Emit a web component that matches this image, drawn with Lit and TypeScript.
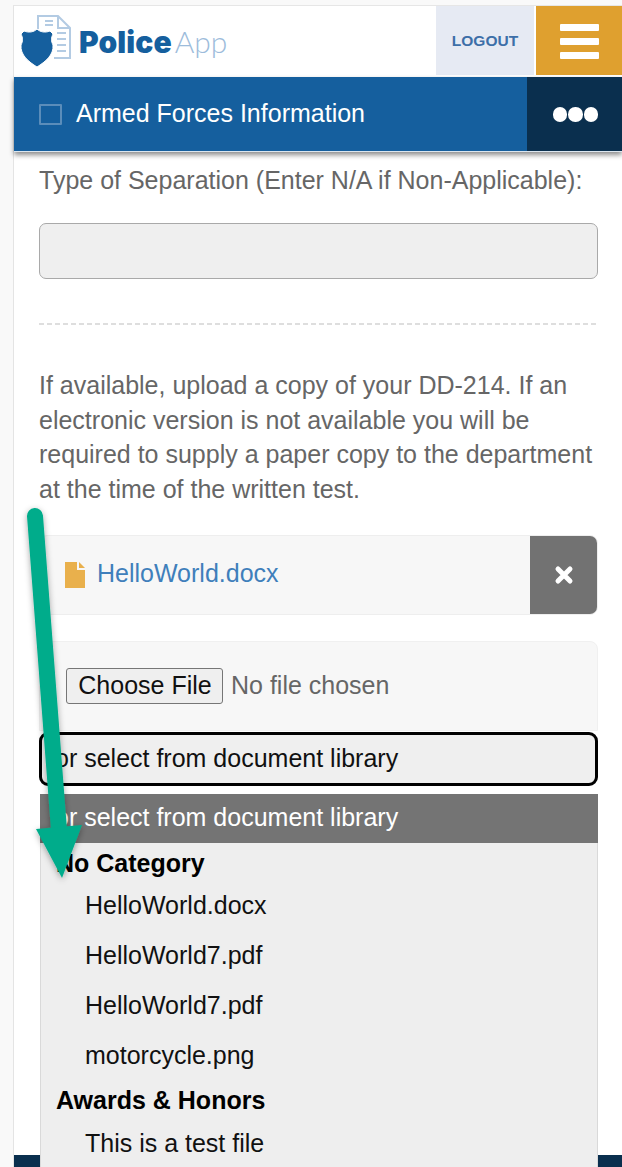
import { LitElement, html, css } from "lit";
import { customElement } from "lit/decorators.js";

@customElement("app-root")
export class AppRoot extends LitElement {
  static styles = css`
    :host { display: block; position: relative; height: 1167px; overflow: hidden; background: #f9f9f9; font-family: "Liberation Sans", Arial, sans-serif; color: #666; }
    * { box-sizing: border-box; }
    .frame { margin-left: 13px; padding-top: 5px; height: 1167px; display: flex; flex-direction: column; }
    .page { background: #fff; border-top: 1px solid #e6e6e6; border-left: 1px solid #e4e4e4; flex: 1; display: flex; flex-direction: column; min-height: 0; }
    .top { height: 69px; display: flex; background: #fff; }
    .logo { flex: 1; display: flex; align-items: center; padding-left: 6px; }
    .logo svg { width: 52px; height: 54px; margin-top: 3px; }
    .brand { margin-left: 7px; font-size: 30px; line-height: 34px; color: #155f9e; font-family: Inter, sans-serif; font-weight: 900; letter-spacing: 0.1px; margin-top: 1px; }
    .brand span { font-family: Lato, sans-serif; font-weight: 300; color: #9dbcdb; letter-spacing: 0; margin-left: 3px; }
    .logout { width: 98px; background: #e6eaf3; display: flex; align-items: center; justify-content: center; font-size: 15.5px; font-weight: bold; color: #3d6fa8; }
    .burger { width: 86px; margin-left: 2px; background: #dfa02f; display: flex; flex-direction: column; align-items: center; justify-content: center; gap: 7px; padding-top: 1px; }
    .burger i { display: block; width: 39px; height: 7px; background: #fff; border-radius: 1px; }
    .bar { margin-top: 2px; height: 75px; background: #155f9e; display: flex; align-items: center; box-shadow: 0 3px 5px rgba(0,0,0,.45); border-bottom: 1px solid #dce6ef; position: relative; }
    .check { width: 23px; height: 21px; margin-left: 25px; border: 2px solid #5b8dba; border-radius: 1px; }
    .bar .title { flex: 1; margin-left: 14px; padding-bottom: 2px; color: #fff; font-size: 25px; }
    .dots { width: 95px; align-self: stretch; background: #0a2f4e; display: flex; align-items: center; justify-content: center; gap: 1px; padding: 1px 0 0 2px; }
    .dots i { width: 14.5px; height: 14.5px; border-radius: 50%; background: #fff; }
    .body { flex: 1; padding: 0 24px 0 25px; min-height: 0; }
    .label { margin-top: 11px; font-size: 25px; line-height: 34px; }
    .input { margin-top: 26px; height: 56px; background: #efefef; border: 1px solid #a9a9a9; border-radius: 7px; }
    .rule { margin-top: 44px; height: 2px; background: repeating-linear-gradient(90deg, #dedede 0 5px, transparent 5px 8px); }
    .para { margin: 43px 0 0; font-size: 25px; line-height: 34.5px; }
    .file { margin-top: 29px; height: 80px; background: #f7f7f7; border: 1px solid #eee; border-radius: 8px; display: flex; align-items: center; padding-left: 25px; overflow: hidden; }
    .file svg { width: 20px; height: 26px; }
    .file a { margin-left: 12px; padding-bottom: 3px; color: #3f7fbb; font-size: 25px; flex: 1; }
    .del { align-self: stretch; width: 67px; background: #727272; display: flex; align-items: center; justify-content: center; margin: -1px 0; }
    .del svg { width: 20px; height: 20px; }
    .chooser { margin-top: 26px; height: 90px; background: #f7f7f7; border: 1px solid #f0f0f0; border-radius: 8px 8px 0 0; padding: 26px 0 0 26px; display: flex; align-items: flex-start; gap: 8px; font-size: 25px; }
    .btn { height: 36px; width: 157px; background: #efefef; border: 1px solid #767676; border-radius: 3px; font: inherit; color: #111; padding: 0 0 2px 1px; }
    .nofile { line-height: 34px; }
    .select { height: 54px; margin-top: 1px; background: #efefef; border: 3px solid #000; border-radius: 9px; font-size: 25px; line-height: 46px; color: #111; padding-left: 13px; }
    .foot { height: 12px; background: #0a2f4e; margin-top: auto; flex: none; }
    .drop { position: absolute; left: 40px; top: 794px; width: 558px; height: 373px; background: #eee; border: 1px solid #d9d9d9; border-bottom: 0; font-size: 25px; color: #111; }
    .drop .head { height: 49px; line-height: 47px; margin: -1px -1px 0; background: #747474; color: #fff; padding-left: 15px; }
    .drop .cat { font-weight: bold; color: #000; padding: 2px 0 0 15px; line-height: 36px; height: 38px; }
    .drop .opt { padding-left: 44px; height: 50px; line-height: 48px; }
    .drop .cat.second { height: 40px; line-height: 38px; padding-top: 0; }
    .drop .opt.last { height: 46px; line-height: 44px; }
    .arrow { position: absolute; left: 0; top: 0; width: 622px; height: 1167px; pointer-events: none; }
  `;

  render() {
    return html`
      <div class="frame">
        <div class="page">
          <div class="top">
            <div class="logo">
              <svg viewBox="0 0 52 54">
                <path d="M18 14V1H38L50 13V43H34" fill="none" stroke="#b3cbe3" stroke-width="2"/>
                <path d="M38 1V13H50" fill="none" stroke="#b3cbe3" stroke-width="2"/>
                <path d="M25 6h8M25 10h8M37 18h9M37 24h9M37 30h9M37 36h9" stroke="#b3cbe3" stroke-width="2"/>
                <path d="M17 14C20 17 25 18 30 16L33 19C31 23 31 26 33 30C34 40 25 47 17 52C9 47 0 40 1 30C3 26 3 23 1 19L4 16C9 18 14 17 17 14z" fill="#155f9e" stroke="#fff" stroke-width="1"/>
              </svg>
              <div class="brand">Police<span>App</span></div>
            </div>
            <div class="logout">LOGOUT</div>
            <div class="burger"><i></i><i></i><i></i></div>
          </div>
          <div class="bar">
            <div class="check"></div>
            <div class="title">Armed Forces Information</div>
            <div class="dots"><i></i><i></i><i></i></div>
          </div>
          <div class="body">
            <div class="label">Type of Separation (Enter N/A if Non-Applicable):</div>
            <div class="input"></div>
            <div class="rule"></div>
            <p class="para">If available, upload a copy of your DD-214. If an electronic version is not available you will be required to supply a paper copy to the department at the time of the written test.</p>
            <div class="file">
              <svg viewBox="0 0 20 26"><path d="M0 0h12v8h8v18H0z" fill="#e9b04c"/><path d="M14 0l6 6h-6z" fill="#e9b04c"/></svg>
              <a>HelloWorld.docx</a>
              <div class="del"><svg viewBox="0 0 20 20"><path d="M4 4l12 12M16 4L4 16" stroke="#fff" stroke-width="5" stroke-linecap="round"/></svg></div>
            </div>
            <div class="chooser"><button class="btn">Choose File</button><span class="nofile">No file chosen</span></div>
            <div class="select">or select from document library</div>
          </div>
          <div class="foot"></div>
        </div>
      </div>
      <div class="drop">
        <div class="head">or select from document library</div>
        <div class="cat">No Category</div>
        <div class="opt">HelloWorld.docx</div>
        <div class="opt">HelloWorld7.pdf</div>
        <div class="opt">HelloWorld7.pdf</div>
        <div class="opt">motorcycle.png</div>
        <div class="cat second">Awards &amp; Honors</div>
        <div class="opt last">This is a test file</div>
      </div>
      <svg class="arrow" viewBox="0 0 622 1167">
        <defs><filter id="s" x="-50%" y="-10%" width="200%" height="120%"><feDropShadow dx="0" dy="2" stdDeviation="3" flood-color="#000" flood-opacity=".35"/></filter></defs>
        <g filter="url(#s)">
          <path d="M35 516L59 830" stroke="#05ac8b" stroke-width="16" stroke-linecap="round" fill="none"/>
          <path d="M36 829L82 825L62 878z" fill="#05ac8b"/>
        </g>
      </svg>
    `;
  }
}
